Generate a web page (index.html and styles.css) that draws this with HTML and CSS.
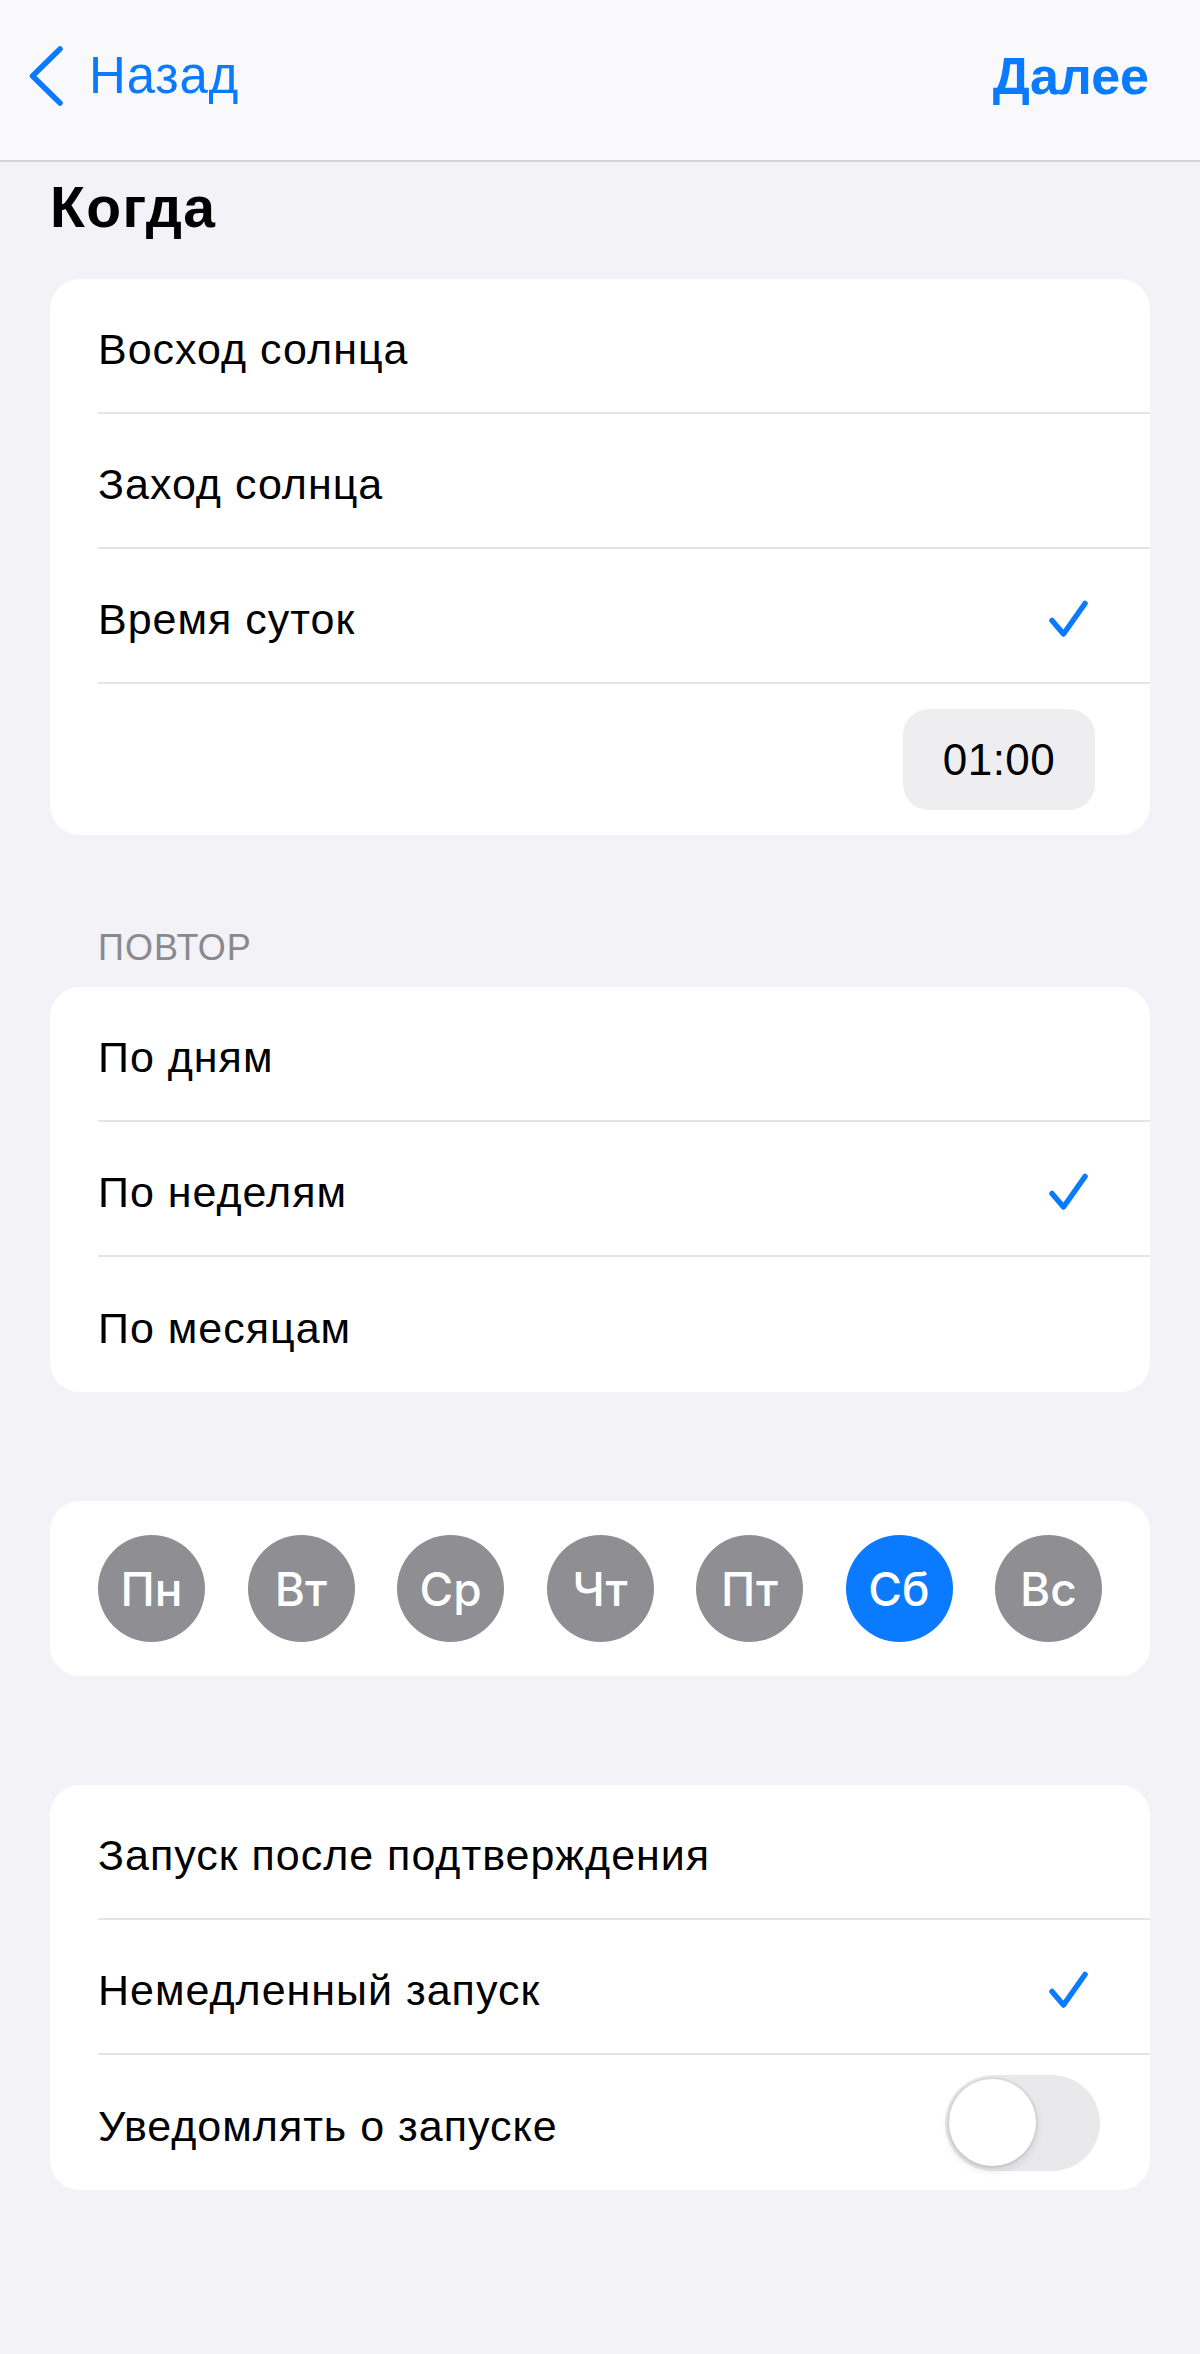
FILE: index.html
```html
<!DOCTYPE html>
<html lang="ru">
<head>
<meta charset="utf-8">
<title>Когда</title>
<link rel="stylesheet" href="styles.css">
</head>
<body>
<header class="nav">
  <div class="nav-back">
    <svg class="chevron" width="40" height="62" viewBox="0 0 40 62"><path d="M34 4 L6.5 31 L34 58" fill="none" stroke="#0a7aff" stroke-width="5.5" stroke-linecap="round" stroke-linejoin="round"/></svg>
    <span class="nav-link">Назад</span>
  </div>
  <span class="nav-link nav-next">Далее</span>
</header>

<main class="content">
  <h1 class="title">Когда</h1>

  <section class="card">
    <div class="row"><div class="row-inner"><span class="label">Восход солнца</span></div></div>
    <div class="row"><div class="row-inner"><span class="label">Заход солнца</span></div></div>
    <div class="row"><div class="row-inner"><span class="label">Время суток</span>
      <svg class="check" width="44" height="40" viewBox="0 0 44 40"><path d="M5 21.5 L16.5 35 L38 4.5" fill="none" stroke="#0a7aff" stroke-width="5.5" stroke-linecap="round" stroke-linejoin="round"/></svg></div></div>
    <div class="row row-time"><div class="row-inner time-inner"><span class="time-pill">01:00</span></div></div>
  </section>

  <h2 class="section-header">ПОВТОР</h2>
  <section class="card card-tight">
    <div class="row"><div class="row-inner"><span class="label">По дням</span></div></div>
    <div class="row"><div class="row-inner"><span class="label">По неделям</span>
      <svg class="check" width="44" height="40" viewBox="0 0 44 40"><path d="M5 21.5 L16.5 35 L38 4.5" fill="none" stroke="#0a7aff" stroke-width="5.5" stroke-linecap="round" stroke-linejoin="round"/></svg></div></div>
    <div class="row"><div class="row-inner"><span class="label">По месяцам</span></div></div>
  </section>

  <section class="card days">
    <span class="day">Пн</span>
    <span class="day">Вт</span>
    <span class="day">Ср</span>
    <span class="day">Чт</span>
    <span class="day">Пт</span>
    <span class="day day-on">Сб</span>
    <span class="day">Вс</span>
  </section>

  <section class="card card-spaced">
    <div class="row"><div class="row-inner"><span class="label">Запуск после подтверждения</span></div></div>
    <div class="row"><div class="row-inner"><span class="label">Немедленный запуск</span>
      <svg class="check" width="44" height="40" viewBox="0 0 44 40"><path d="M5 21.5 L16.5 35 L38 4.5" fill="none" stroke="#0a7aff" stroke-width="5.5" stroke-linecap="round" stroke-linejoin="round"/></svg></div></div>
    <div class="row"><div class="row-inner"><span class="label">Уведомлять о запуске</span>
      <span class="toggle"><span class="knob"></span></span></div></div>
  </section>
</main>
</body>
</html>
```

FILE: styles.css
```css
html, body {
  margin: 0;
  padding: 0;
}
body {
  background: #f2f2f7;
  font-family: "Liberation Sans", Arial, sans-serif;
  color: #000;
  min-height: 2354px;
}
.nav {
  height: 160px;
  box-sizing: content-box;
  background: #f9f9fb;
  border-bottom: 2px solid #d3d3d7;
  display: flex;
  justify-content: space-between;
  align-items: flex-start;
  padding: 0 51px 0 26px;
}
.nav-back {
  display: flex;
  align-items: flex-start;
}
.chevron {
  display: block;
  margin-top: 45px;
  margin-right: 23px;
}
.nav-link {
  display: block;
  margin-top: 46px;
  font-size: 51px;
  line-height: 60px;
  letter-spacing: 0.8px;
  color: #0a7aff;
}
.nav-next {
  font-weight: 700;
  font-size: 52px;
  letter-spacing: 0;
}
.content {
  padding: 0 50px;
}
.title {
  margin: 13px 0 39px;
  font-size: 57px;
  line-height: 65px;
  font-weight: 700;
  letter-spacing: 1.5px;
}
.card {
  background: #fff;
  border-radius: 30px;
  overflow: hidden;
}
.row {
  padding-left: 48px;
}
.row-inner {
  height: 135px;
  box-sizing: border-box;
  border-bottom: 2px solid #e4e4e8;
  display: flex;
  align-items: center;
  justify-content: space-between;
  padding: 6px 50px 0 0;
}
.row:last-child .row-inner {
  border-bottom: none;
}
.label {
  font-size: 43px;
  line-height: 48px;
  letter-spacing: 1px;
}
.check {
  display: block;
  margin-right: 9px;
}
.row-time .row-inner {
  height: 151px;
  padding: 0 55px 0 0;
  justify-content: flex-end;
}
.time-pill {
  width: 192px;
  height: 101px;
  border-radius: 26px;
  background: #eeeef0;
  display: flex;
  align-items: center;
  justify-content: center;
  font-size: 44px;
  letter-spacing: 0.5px;
}
.section-header {
  margin: 93px 0 19px;
  padding-left: 48px;
  font-size: 36px;
  line-height: 40px;
  font-weight: 400;
  letter-spacing: 1px;
  color: #8a8a8e;
}
.days {
  margin-top: 109px;
  padding: 34px 48px;
  display: flex;
  justify-content: space-between;
}
.day {
  width: 107px;
  height: 107px;
  border-radius: 50%;
  background: #8e8e93;
  color: #fff;
  font-family: Inter, "Liberation Sans", sans-serif;
  font-weight: 500;
  font-size: 46px;
  display: flex;
  align-items: center;
  justify-content: center;
}
.day-on {
  background: #0a7aff;
}
.card-spaced {
  margin-top: 109px;
}
.toggle {
  width: 155px;
  height: 96px;
  box-sizing: border-box;
  border-radius: 48px;
  background: #e9e9eb;
  display: flex;
  align-items: center;
  padding-left: 4px;
  margin-top: -6px;
}
.knob {
  width: 87px;
  height: 87px;
  border-radius: 50%;
  background: #fff;
  box-shadow: 0 0 0 2px rgba(0, 0, 0, 0.05), 0 4px 10px rgba(0, 0, 0, 0.12);
}
```
